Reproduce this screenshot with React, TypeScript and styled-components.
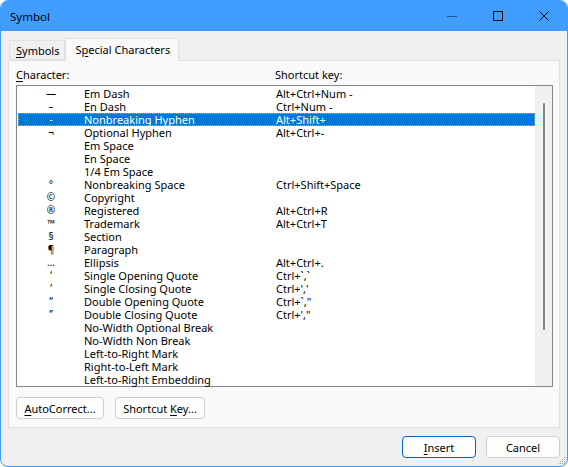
import { createGlobalStyle, styled } from "styled-components";

const GlobalStyle = createGlobalStyle`
  html, body {
    margin: 0;
    padding: 0;
    background: #ffffff;
  }
  body {
    font-family: "Noto Sans", "Open Sans", sans-serif;
    font-size: 11px;
    color: #000;
  }
`;

const Window = styled.div`
  position: relative;
  width: 568px;
  height: 467px;
  box-sizing: border-box;
  border: 1px solid #3d9bfd;
  border-radius: 8px;
  overflow: hidden;
  background: #f0f0f0;
  display: flex;
  flex-direction: column;
`;

const TitleBar = styled.div`
  height: 30px;
  flex: none;
  background: #409cff;
  display: flex;
  align-items: center;
  padding-left: 9px;
`;

const Title = styled.div`
  flex: 1;
  font-size: 11.5px;
`;

const Control = styled.div<{ $dim?: boolean }>`
  width: 46px;
  height: 30px;
  display: flex;
  align-items: center;
  justify-content: center;
  opacity: ${(p) => (p.$dim ? 0.45 : 1)};
`;

const Body = styled.div`
  flex: 1;
  display: flex;
  flex-direction: column;
  padding: 7px 7px 0 7px;
`;

const TabStrip = styled.div`
  height: 22px;
  display: flex;
  align-items: flex-end;
  padding-left: 1px;
`;

const Tab = styled.div<{ $active?: boolean }>`
  box-sizing: border-box;
  height: ${(p) => (p.$active ? "23px" : "20px")};
  margin-bottom: ${(p) => (p.$active ? "-1px" : "0")};
  padding: 0 ${(p) => (p.$active ? "8px" : "5px")} 0 ${(p) => (p.$active ? "9px" : "6px")};
  display: flex;
  align-items: center;
  border: 1px solid #e1e1e1;
  border-bottom: ${(p) => (p.$active ? "none" : "1px solid #e1e1e1")};
  background: ${(p) => (p.$active ? "#f9f9f9" : "#f0f0f0")};
  position: relative;
  z-index: ${(p) => (p.$active ? 1 : 0)};
  padding-bottom: ${(p) => (p.$active ? "1px" : "0")};
`;

const Key = styled.span`
  text-decoration: underline;
  text-underline-offset: 2px;
`;

const Panel = styled.div`
  box-sizing: border-box;
  height: 368px;
  border: 1px solid #e1e1e1;
  background: #f9f9f9;
  padding: 6px 6px 0 7px;
  display: flex;
  flex-direction: column;
`;

const Labels = styled.div`
  height: 16px;
  line-height: 16px;
  margin-bottom: 2px;
  display: grid;
  grid-template-columns: 259px 1fr;
`;

const ListBox = styled.div`
  box-sizing: border-box;
  height: 302px;
  border: 1px solid #828790;
  background: #fff;
  display: flex;
`;

const Rows = styled.div`
  flex: 1;
  padding-top: 1px;
`;

const Row = styled.div<{ $selected?: boolean }>`
  height: 13px;
  line-height: 13px;
  margin-left: 1px;
  display: grid;
  grid-template-columns: 66px 192px 1fr;
  white-space: nowrap;
  background: ${(p) => (p.$selected ? "#0078d7" : "transparent")};
  color: ${(p) => (p.$selected ? "#fff" : "#000")};
  outline: ${(p) => (p.$selected ? "1px dotted #f0a030" : "none")};
  outline-offset: -1px;
`;

const Glyph = styled.span`
  text-align: center;
  font-size: 10px;
`;

const ScrollTrack = styled.div`
  width: 17px;
  flex: none;
  background: #f0f0f0;
  display: flex;
  justify-content: center;
  padding-top: 17px;
`;

const Thumb = styled.div`
  width: 2px;
  height: 227px;
  border-radius: 1px;
  background: #858585;
`;

const ButtonRow = styled.div<{ $end?: boolean }>`
  display: flex;
  gap: ${(p) => (p.$end ? "10px" : "11px")};
  justify-content: ${(p) => (p.$end ? "flex-end" : "flex-start")};
  margin-top: ${(p) => (p.$end ? "8px" : "10px")};
`;

const Button = styled.div<{ $width: number; $default?: boolean }>`
  box-sizing: border-box;
  width: ${(p) => p.$width}px;
  height: 22px;
  display: flex;
  align-items: center;
  justify-content: center;
  border: 1px solid ${(p) => (p.$default ? "#0067c0" : "#d0d0d0")};
  border-radius: 4px;
  background: #fdfdfd;
`;

const Grip = styled.svg`
  position: absolute;
  right: 1px;
  bottom: 1px;
`;

const rows: [string, string, string][] = [
  ["\u2014", "Em Dash", "Alt+Ctrl+Num -"],
  ["\u2013", "En Dash", "Ctrl+Num -"],
  ["-", "Nonbreaking Hyphen", "Alt+Shift+"],
  ["\u00ac", "Optional Hyphen", "Alt+Ctrl+-"],
  ["", "Em Space", ""],
  ["", "En Space", ""],
  ["", "1/4 Em Space", ""],
  ["\u00b0", "Nonbreaking Space", "Ctrl+Shift+Space"],
  ["\u00a9", "Copyright", ""],
  ["\u00ae", "Registered", "Alt+Ctrl+R"],
  ["\u2122", "Trademark", "Alt+Ctrl+T"],
  ["\u00a7", "Section", ""],
  ["\u00b6", "Paragraph", ""],
  ["\u2026", "Ellipsis", "Alt+Ctrl+."],
  ["\u2018", "Single Opening Quote", "Ctrl+`,`"],
  ["\u2019", "Single Closing Quote", "Ctrl+','"],
  ["\u201c", "Double Opening Quote", "Ctrl+`,\""],
  ["\u201d", "Double Closing Quote", "Ctrl+',\""],
  ["", "No-Width Optional Break", ""],
  ["", "No-Width Non Break", ""],
  ["", "Left-to-Right Mark", ""],
  ["", "Right-to-Left Mark", ""],
  ["", "Left-to-Right Embedding", ""],
];

export default function App() {
  return (
    <>
      <GlobalStyle />
      <Window>
        <TitleBar>
          <Title>Symbol</Title>
          <Control $dim>
            <svg width="10" height="10" viewBox="0 0 10 10">
              <path d="M0 5.5h10" stroke="#000" strokeWidth="1" />
            </svg>
          </Control>
          <Control>
            <svg width="10" height="10" viewBox="0 0 10 10">
              <rect x="0.5" y="0.5" width="9" height="9" fill="none" stroke="#000" strokeWidth="1" />
            </svg>
          </Control>
          <Control>
            <svg width="10" height="10" viewBox="0 0 10 10">
              <path d="M0.5 0.5l9 9M9.5 0.5l-9 9" stroke="#000" strokeWidth="1" />
            </svg>
          </Control>
        </TitleBar>
        <Body>
          <TabStrip>
            <Tab>
              <Key>S</Key>ymbols
            </Tab>
            <Tab $active>
              S<Key>p</Key>ecial Characters
            </Tab>
          </TabStrip>
          <Panel>
            <Labels>
              <span>
                <Key>C</Key>haracter:
              </span>
              <span>Shortcut key:</span>
            </Labels>
            <ListBox>
              <Rows>
                {rows.map(([ch, name, key], i) => (
                  <Row key={name} $selected={i === 2}>
                    <Glyph>{ch}</Glyph>
                    <span>{name}</span>
                    <span>{key}</span>
                  </Row>
                ))}
              </Rows>
              <ScrollTrack>
                <Thumb />
              </ScrollTrack>
            </ListBox>
            <ButtonRow>
              <Button $width={88}>
                <span>
                  <Key>A</Key>utoCorrect...
                </span>
              </Button>
              <Button $width={90}>
                <span>
                  Shortcut <Key>K</Key>ey...
                </span>
              </Button>
            </ButtonRow>
          </Panel>
          <ButtonRow $end>
            <Button $width={74} $default>
              <span>
                <Key>I</Key>nsert
              </span>
            </Button>
            <Button $width={74}>Cancel</Button>
          </ButtonRow>
        </Body>
        <Grip width="10" height="10" viewBox="0 0 10 10">
          <g fill="#a0a0a0">
            <rect x="8" y="2" width="1" height="1" />
            <rect x="6" y="4" width="1" height="1" />
            <rect x="8" y="4" width="1" height="1" />
            <rect x="4" y="6" width="1" height="1" />
            <rect x="6" y="6" width="1" height="1" />
            <rect x="8" y="6" width="1" height="1" />
            <rect x="2" y="8" width="1" height="1" />
            <rect x="4" y="8" width="1" height="1" />
            <rect x="6" y="8" width="1" height="1" />
            <rect x="8" y="8" width="1" height="1" />
          </g>
        </Grip>
      </Window>
    </>
  );
}
